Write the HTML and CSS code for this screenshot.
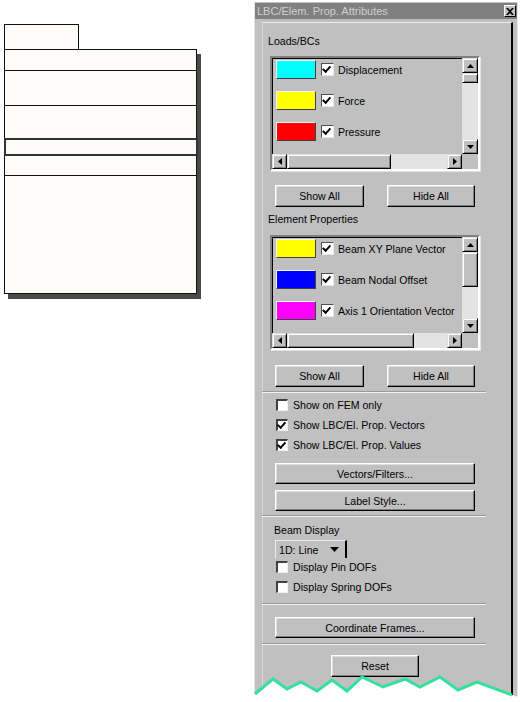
FILE: index.html
```html
<!DOCTYPE html>
<html lang="en">
<head>
    <meta charset="UTF-8">
    <title>LBC/Elem. Prop. Attributes</title>
    <link rel="stylesheet" href="styles.css">
</head>
<body>
    <!-- Hoja de la izquierda -->
    <div class="doc">
        <div class="doc-tab"></div>
        <div class="doc-sheet">
            <div class="doc-row r1"></div>
            <div class="doc-row r2"></div>
            <div class="doc-row r3"></div>
            <div class="doc-row r4"></div>
            <div class="doc-row r5"></div>
            <div class="doc-row r6"></div>
        </div>
    </div>

    <!-- Ventana de dialogo -->
    <div class="dialog">
        <div class="titlebar">
            <span class="title">LBC/Elem. Prop. Attributes</span>
            <span class="close">
                <svg width="8" height="7" viewBox="0 0 8 7"><path d="M0 0h2l2 2 2-2h2L5 3.5 8 7H6L4 5 2 7H0l3-3.5z" fill="#000"/></svg>
            </span>
        </div>

        <div class="panel">
            <div class="label first">Loads/BCs</div>
            <div class="listbox">
                <div class="items">
                    <div class="item"><span class="swatch cyan"></span><span class="check on"></span>Displacement</div>
                    <div class="item"><span class="swatch yellow"></span><span class="check on"></span>Force</div>
                    <div class="item"><span class="swatch red"></span><span class="check on"></span>Pressure</div>
                </div>
                <div class="vscroll">
                    <span class="arrow"><svg width="7" height="4"><polygon points="3.5,0 7,4 0,4" fill="#000"/></svg></span>
                    <span class="thumb" style="height: 10px"></span>
                    <span class="track"></span>
                    <span class="arrow"><svg width="7" height="4"><polygon points="0,0 7,0 3.5,4" fill="#000"/></svg></span>
                </div>
                <div class="hscroll">
                    <span class="arrow"><svg width="4" height="7"><polygon points="0,3.5 4,0 4,7" fill="#000"/></svg></span>
                    <span class="thumb" style="width: 104px"></span>
                    <span class="track"></span>
                    <span class="arrow"><svg width="4" height="7"><polygon points="0,0 4,3.5 0,7" fill="#000"/></svg></span>
                </div>
                <div class="corner"></div>
            </div>
            <div class="btn-pair first-pair">
                <div class="btn show">Show All</div>
                <div class="btn hide">Hide All</div>
            </div>

            <div class="label second">Element Properties</div>
            <div class="listbox list-2">
                <div class="items">
                    <div class="item"><span class="swatch yellow"></span><span class="check on"></span>Beam XY Plane Vector</div>
                    <div class="item"><span class="swatch blue"></span><span class="check on"></span>Beam Nodal Offset</div>
                    <div class="item"><span class="swatch magenta"></span><span class="check on"></span>Axis 1 Orientation Vector</div>
                </div>
                <div class="vscroll">
                    <span class="arrow"><svg width="7" height="4"><polygon points="3.5,0 7,4 0,4" fill="#000"/></svg></span>
                    <span class="thumb" style="height: 35px"></span>
                    <span class="track"></span>
                    <span class="arrow"><svg width="7" height="4"><polygon points="0,0 7,0 3.5,4" fill="#000"/></svg></span>
                </div>
                <div class="hscroll">
                    <span class="arrow"><svg width="4" height="7"><polygon points="0,3.5 4,0 4,7" fill="#000"/></svg></span>
                    <span class="thumb" style="width: 127px"></span>
                    <span class="track"></span>
                    <span class="arrow"><svg width="4" height="7"><polygon points="0,0 4,3.5 0,7" fill="#000"/></svg></span>
                </div>
                <div class="corner"></div>
            </div>
            <div class="btn-pair second-pair">
                <div class="btn show">Show All</div>
                <div class="btn hide">Hide All</div>
            </div>

            <div class="sep sep-1"></div>

            <div class="opts">
                <div class="opt"><span class="box"></span>Show on FEM only</div>
                <div class="opt"><span class="box on"></span>Show LBC/El. Prop. Vectors</div>
                <div class="opt"><span class="box on"></span>Show LBC/El. Prop. Values</div>
            </div>

            <div class="btn wide vectors">Vectors/Filters...</div>
            <div class="btn wide labels">Label Style...</div>

            <div class="sep sep-2"></div>

            <div class="label beam">Beam Display</div>
            <div class="combo">
                <span>1D: Line</span>
                <svg width="9" height="5"><polygon points="0,0 9,0 4.5,5" fill="#000"/></svg>
            </div>
            <div class="opts small">
                <div class="opt"><span class="box"></span>Display Pin DOFs</div>
                <div class="opt"><span class="box"></span>Display Spring DOFs</div>
            </div>

            <div class="sep sep-3"></div>
            <div class="btn wide frames">Coordinate Frames...</div>
            <div class="sep sep-4"></div>
            <div class="btn reset">Reset</div>
        </div>

        <!-- Borde cortado -->
        <svg class="tear" width="272" height="32" viewBox="0 0 272 32">
            <polygon points="0,24 5,22 23,7 37,17 51,10 67,19 82,8 97,19 112,5 133,15 155,7 170,15 190,5 208,18 227,10 262,23 272,26 272,32 0,32" fill="#fff"/>
            <polyline points="5,22 23,7 37,17 51,10 67,19 82,8 97,19 112,5 133,15 155,7 170,15 190,5 208,18 227,10 262,23" fill="none" stroke="#33e0a0" stroke-width="3" stroke-linejoin="miter"/>
        </svg>
    </div>
</body>
</html>
```

FILE: styles.css
```css
body {
    margin: 0;
    padding: 0;
    background: #fff;
    display: flex;
    align-items: flex-start;
    font-family: 'Liberation Sans', Arial, sans-serif;
    font-size: 10.6px;
    color: #000;
}

/* Hoja izquierda */
.doc {
    margin: 24px 0 0 4px;
    width: 193px;
}
.doc-tab {
    width: 73px;
    height: 24px;
    background: #fdfcf8;
    border: 1px solid #111;
    border-bottom: none;
}
.doc-sheet {
    width: 191px;
    background: #fdfcf8;
    border: 1px solid #111;
    box-shadow: 4px 5px 0 #4a4a4a;
}
.doc-row {
    border-bottom: 1px solid #111;
}
.r1 { height: 20px; }
.r2 { height: 34px; }
.r3 { height: 32px; }
.r4 {
    height: 14px;
    border: 2px solid #333;
    margin: -1px -2px 0 -1px;
}
.r5 { height: 20px; margin-top: -1px; }
.r6 { height: 117px; border-bottom: none; }

/* Dialogo */
.dialog {
    position: relative;
    margin: 2px 0 0 57px;
    width: 264px;
    height: 700px;
    box-sizing: border-box;
    background: #c0c0c0;
    border-left: 1px solid #e6e6e6;
    border-right: 1px solid #e6e6e6;
}
.titlebar {
    margin-top: 1px;
    height: 16px;
    background: #808080;
    display: flex;
    align-items: center;
    justify-content: space-between;
    padding: 0 1px 0 2px;
}
.title {
    color: #cfcfcf;
    font-size: 11px;
}
.close {
    width: 10px;
    height: 10px;
    background: #c0c0c0;
    border: 1px solid;
    border-color: #fff #000 #000 #fff;
    display: flex;
    align-items: center;
    justify-content: center;
}
.panel {
    margin: 3px 4px 0 7px;
    height: 690px;
    border-top: 1px solid #ececec;
    border-left: 1px solid #d8d8d8;
    border-right: 2px solid #000;
}

.label {
    height: 12px;
    line-height: 12px;
    padding-left: 5px;
}
.label.first { margin-top: 12px; }
.label.second { margin-top: 6px; }
.label.beam { margin-top: 7px; padding-left: 11px; }

/* Listas */
.listbox {
    margin: 9px 0 0 7px;
    width: 206px;
    border: 2px solid;
    border-color: #808080 #fff #fff #808080;
    box-shadow: inset 1px 1px 0 #000, 1px 1px 0 #e2e2e2;
    display: grid;
    grid-template-columns: 190px 16px;
    grid-template-rows: 96px 15px;
    background: #c0c0c0;
}
.list-2 { margin-top: 10px; }
.items {
    padding: 2px 0 0 4px;
    display: flex;
    flex-direction: column;
    gap: 12px;
}
.item {
    display: flex;
    align-items: center;
    height: 19px;
    white-space: nowrap;
}
.swatch {
    width: 38px;
    height: 17px;
    border: 1px solid;
    border-color: #f4f4f4 #404040 #404040 #f4f4f4;
    margin-right: 5px;
}
.cyan { background: #00ffff; }
.yellow { background: #ffff00; }
.red { background: #ff0000; }
.blue { background: #0000ff; }
.magenta { background: #ff00ff; }

.check, .box {
    box-sizing: border-box;
    background: #fff;
    border: 1px solid;
    border-color: #505050 #e8e8e8 #e8e8e8 #505050;
    display: inline-block;
    position: relative;
}
.check {
    width: 13px;
    height: 13px;
    margin-right: 4px;
}
.check.on::after, .box.on::after {
    content: '';
    position: absolute;
    left: 2px;
    top: 1px;
    width: 6px;
    height: 3px;
    border-left: 2px solid #000;
    border-bottom: 2px solid #000;
    transform: rotate(-48deg);
    transform-origin: 40% 80%;
    top: 2px;
}

.vscroll {
    display: flex;
    flex-direction: column;
}
.hscroll {
    display: flex;
}
.arrow {
    box-sizing: border-box;
    width: 16px;
    height: 15px;
    flex: none;
    background: #c0c0c0;
    border: 1px solid;
    border-color: #dfdfdf #000 #000 #dfdfdf;
    box-shadow: inset 1px 1px 0 #fff, inset -1px -1px 0 #808080;
    display: flex;
    align-items: center;
    justify-content: center;
}
.hscroll .arrow { width: 15px; }
.thumb {
    box-sizing: border-box;
    flex: none;
    background: #c0c0c0;
    border: 1px solid;
    border-color: #dfdfdf #000 #000 #dfdfdf;
    box-shadow: inset 1px 1px 0 #fff, inset -1px -1px 0 #808080;
}
.vscroll .thumb { width: 16px; }
.hscroll .thumb { height: 15px; }
.track {
    flex: 1;
    background: #e3e3e3;
}
.corner { background: #c0c0c0; }

/* Botones */
.btn {
    box-sizing: border-box;
    background: #c0c0c0;
    border: 1px solid;
    border-color: #fff #000 #000 #fff;
    box-shadow: inset -1px -1px 0 #808080, inset 1px 1px 0 #dfdfdf;
    display: flex;
    align-items: center;
    justify-content: center;
}
.btn-pair {
    display: flex;
    gap: 23px;
    margin-left: 12px;
}
.first-pair { margin-top: 14px; }
.second-pair { margin-top: 15px; }
.btn.show { width: 89px; height: 22px; }
.btn.hide { width: 88px; height: 22px; }
.btn.wide {
    width: 200px;
    height: 21px;
    margin-left: 12px;
}
.vectors { margin-top: 8px; }
.labels { margin-top: 6px; }
.frames { margin-top: 12px; }
.btn.reset {
    width: 88px;
    height: 22px;
    margin: 10px 0 0 68px;
}

.sep {
    margin-left: -1px;
    width: 224px;
    height: 0;
    border-top: 1px solid #9a9a9a;
    border-bottom: 1px solid #f2f2f2;
}
.sep-1 { margin-top: 4px; }
.sep-2 { margin-top: 4px; }
.sep-3 { margin-top: 7px; }
.sep-4 { margin-top: 5px; }

/* Casillas */
.opts {
    margin: 2px 0 0 13px;
}
.opt {
    height: 20px;
    display: flex;
    align-items: center;
    white-space: nowrap;
}
.box {
    width: 12px;
    height: 12px;
    margin-right: 5px;
    border-width: 2px 1px 1px 2px;
    border-color: #404040 #f0f0f0 #f0f0f0 #404040;
}
.box.on::after {
    left: 1px;
    top: 1px;
}
.opts.small { margin-top: 0; }
.opts.small .opt { height: 18px; }
.opts.small .opt + .opt { margin-top: 2px; }

.combo {
    margin: 4px 0 0 12px;
    width: 72px;
    height: 18px;
    box-sizing: border-box;
    border-top: 1px solid #ececec;
    border-left: 1px solid #ececec;
    border-right: 2px solid #000;
    display: flex;
    align-items: center;
    justify-content: space-between;
    padding: 0 6px 0 3px;
}

/* Borde cortado */
.tear {
    position: absolute;
    left: -5px;
    bottom: -2px;
}
```
